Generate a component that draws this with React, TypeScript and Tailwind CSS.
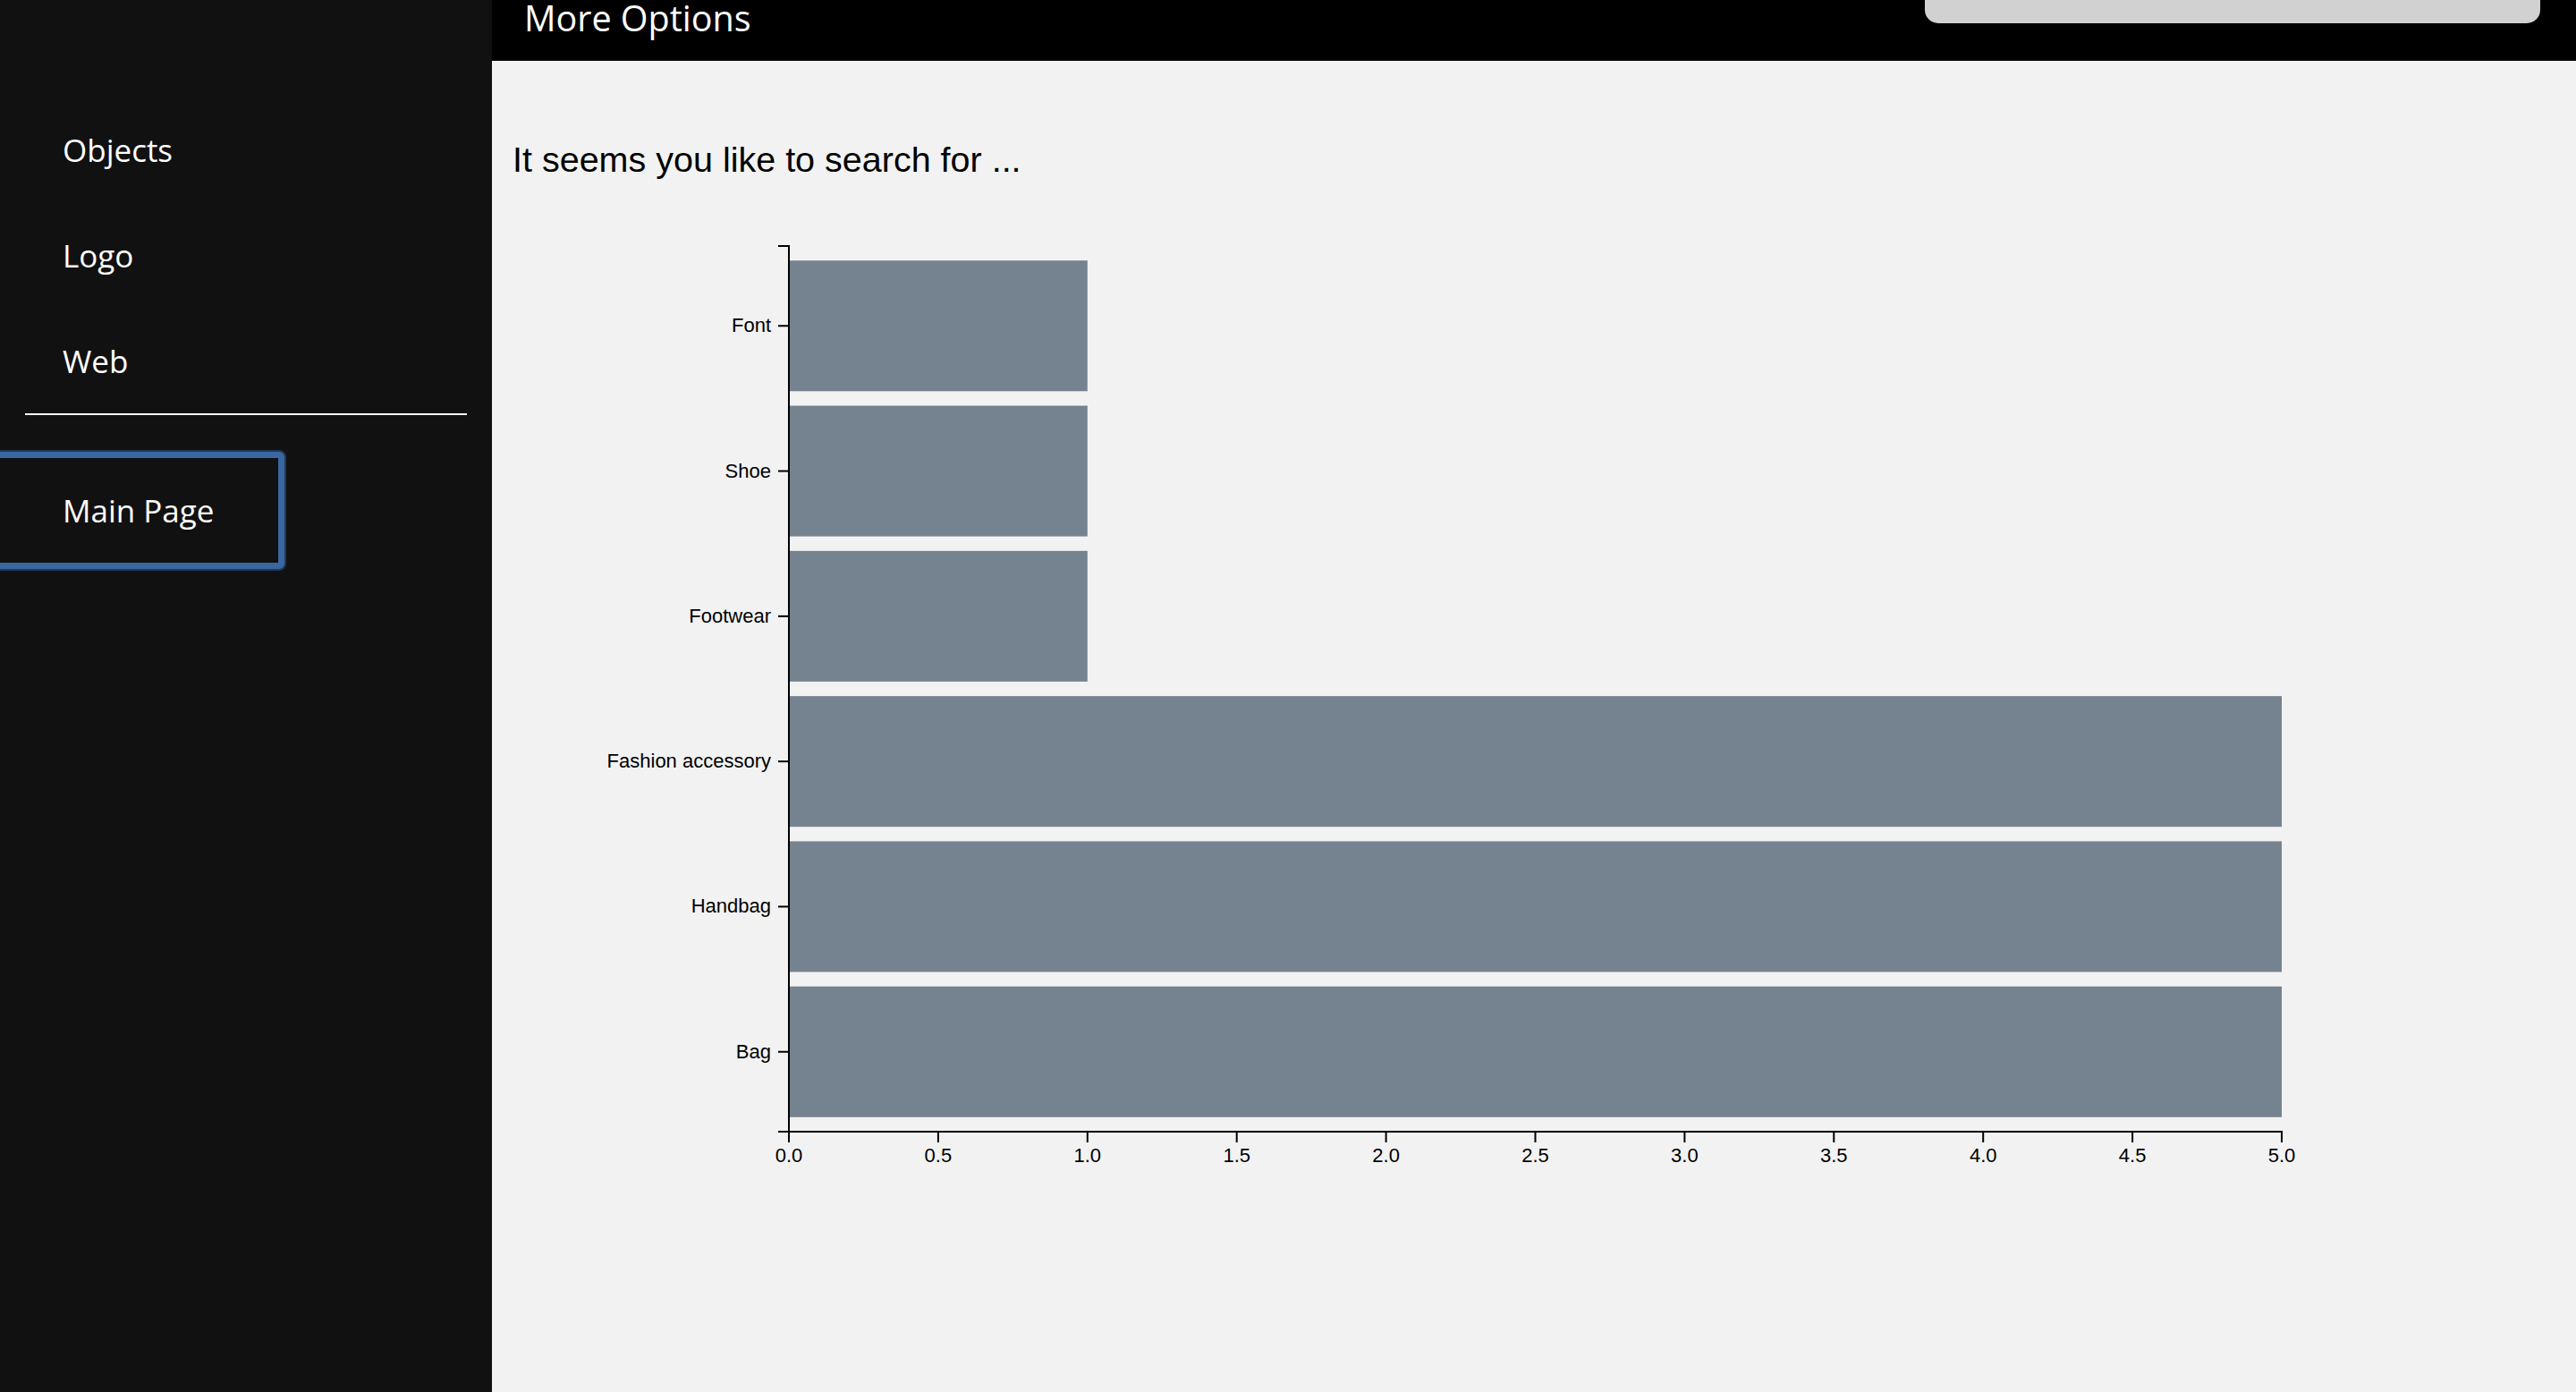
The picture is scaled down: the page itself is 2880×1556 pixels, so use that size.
import React from "react";

const data = [
  { label: "Font", v: 1 },
  { label: "Shoe", v: 1 },
  { label: "Footwear", v: 1 },
  { label: "Fashion accessory", v: 5 },
  { label: "Handbag", v: 5 },
  { label: "Bag", v: 5 },
];

const ticks = [0, 0.5, 1, 1.5, 2, 2.5, 3, 3.5, 4, 4.5, 5];

function Chart() {
  const x0 = 332;
  const unit = 333.8;
  const top = 74;
  const bottom = 1064;
  const step = (bottom - top) / 6.1;
  const bw = step * 0.9;
  const xEnd = x0 + unit * 5;
  return (
    <svg width="2330" height="1150" viewBox="0 0 2330 1150" className="block">
      {data.map((d, i) => {
        const y = top + step * 0.1 + i * step;
        return (
          <rect key={d.label} x={x0} y={y} width={unit * d.v} height={bw} fill="#75828f" />
        );
      })}
      <path d={`M${x0 - 12},${top} H${x0} V${bottom} H${x0 - 12}`} fill="none" stroke="#000" strokeWidth="2" />
      {data.map((d, i) => {
        const cy = top + step * 0.1 + i * step + bw / 2;
        return (
          <g key={d.label}>
            <line x1={x0 - 12} x2={x0} y1={cy} y2={cy} stroke="#000" strokeWidth="2" />
            <text
              x={x0 - 20}
              y={cy}
              dy="0.32em"
              textAnchor="end"
              fontSize="22"
              fontFamily="'Liberation Sans', Arial, sans-serif"
              fill="#000"
            >
              {d.label}
            </text>
          </g>
        );
      })}
      <path d={`M${x0},${bottom + 12} V${bottom} H${xEnd} V${bottom + 12}`} fill="none" stroke="#000" strokeWidth="2" />
      {ticks.map((t) => {
        const x = x0 + unit * t;
        return (
          <g key={t}>
            <line x1={x} x2={x} y1={bottom} y2={bottom + 12} stroke="#000" strokeWidth="2" />
            <text
              x={x}
              y={bottom + 18}
              dy="0.71em"
              textAnchor="middle"
              fontSize="22"
              fontFamily="'Liberation Sans', Arial, sans-serif"
              fill="#000"
            >
              {t.toFixed(1)}
            </text>
          </g>
        );
      })}
    </svg>
  );
}

export default function App() {
  return (
    <div className="flex h-[1556px] w-[2880px] overflow-hidden bg-[#f2f2f2]">
      <aside className="flex w-[550px] shrink-0 flex-col bg-[#111111] text-white font-['Open_Sans',sans-serif]">
        <nav className="flex flex-col gap-[69px] pl-[70px] pt-[143px]">
          <span className="text-[35px] leading-[49px]">Objects</span>
          <span className="text-[35px] leading-[49px]">Logo</span>
          <span className="text-[35px] leading-[49px]">Web</span>
        </nav>
        <div className="mx-[28px] mt-[34px] h-[2px] bg-white" />
        <div className="-ml-[20px] mt-[41px] flex h-[131px] w-[338px] items-center rounded-[6px] border-[7px] border-[#3b67a1] pl-[83px] shadow-[0_0_0_2px_#22395a]">
          <span className="text-[35px] leading-[49px]">Main Page</span>
        </div>
      </aside>
      <main className="flex min-w-0 flex-1 flex-col">
        <header className="flex h-[68px] shrink-0 items-start justify-between bg-black">
          <h1 className="pl-[36px] text-[39.5px] leading-[40px] text-white font-['Open_Sans',sans-serif]">
            More Options
          </h1>
          <div className="mr-[40px] h-[26px] w-[688px] rounded-b-[15px] bg-[#d1d1d1]" />
        </header>
        <p className="mt-[87px] pl-[23px] text-[39.5px] leading-[46px] text-black font-['Liberation_Sans',Arial,sans-serif]">
          It seems you like to search for ...
        </p>
        <Chart />
      </main>
    </div>
  );
}
